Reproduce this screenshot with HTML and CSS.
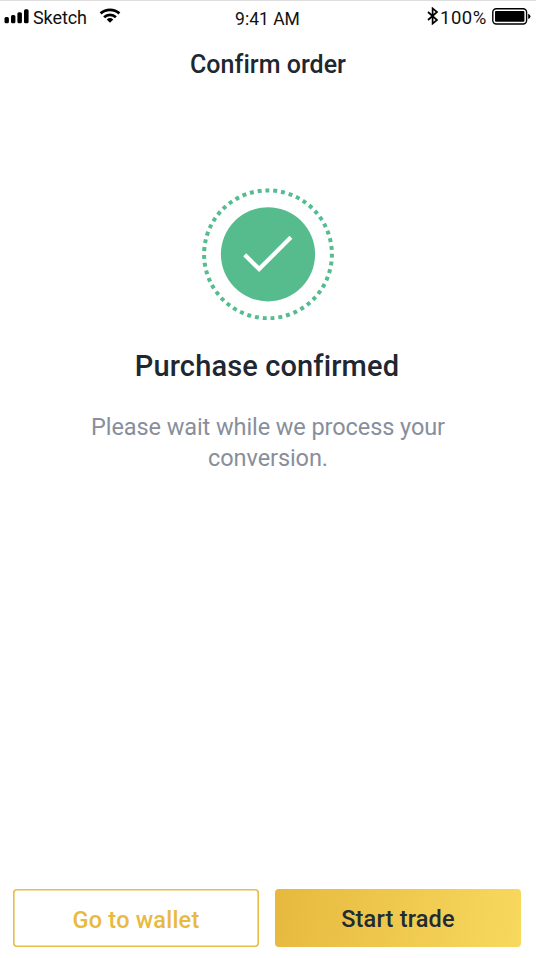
FILE: index.html
```html
<!DOCTYPE html>
<html lang="en">
<head>
<meta charset="utf-8">
<title>Confirm order</title>
<link rel="stylesheet" href="styles.css">
</head>
<body>
<div class="screen">
  <header class="status">
    <div class="status-left">
      <svg class="signal" width="25" height="15" viewBox="0 0 25 15"><rect x="0.5" y="8" width="4.4" height="6.3" rx="1.5"/><rect x="7" y="6" width="4.4" height="8.3" rx="1.5"/><rect x="13.4" y="3.2" width="4.5" height="11.1" rx="1.5"/><rect x="20" y="0.2" width="4.6" height="14.1" rx="1.5"/></svg>
      <span class="carrier">Sketch</span>
      <svg class="wifi" width="22" height="15" viewBox="0 0 22 15"><g fill="none" stroke="#000" stroke-width="2.8"><path d="M1.6 5.4C7 .6 15 .6 20.4 5.4"/><path d="M5.1 9.2C8.4 6.2 13.6 6.2 16.9 9.2"/></g><path d="M7.7 11.4Q11 8.8 14.3 11.4L11 14.7Z"/></svg>
    </div>
    <time class="clock">9:41 AM</time>
    <div class="status-right">
      <svg class="bluetooth" width="12" height="18" viewBox="0 0 12 18"><path d="M1 5L10 13L5.6 16.6V1.4L10 5L1 13" fill="none" stroke="#000" stroke-width="1.7"/></svg>
      <span class="percent">100%</span>
      <svg class="battery" width="39" height="17" viewBox="0 0 39 17"><rect x=".8" y=".8" width="33.8" height="15.2" rx="3.5" fill="none" stroke="#000" stroke-width="1.4"/><rect x="3" y="3" width="29.4" height="10.8" rx="1"/><path d="M36.2 5.8Q38.5 6.8 38.5 8.4T36.2 11Z"/></svg>
    </div>
  </header>
  <h1 class="title">Confirm order</h1>
  <main class="content">
    <svg class="badge" width="132" height="132" viewBox="0 0 132 132">
      <circle class="ring" cx="66" cy="66.3" r="63.9" pathLength="102" transform="rotate(-92.3 66 66.3)"/>
      <circle class="disc" cx="66" cy="66.3" r="47.1"/>
      <path class="check" d="M42.7 66.7L57.1 81.1L88.9 49.3"/>
    </svg>
    <h2 class="heading">Purchase confirmed</h2>
    <p class="message"><span class="line-one">Please wait while we process your</span><br><span class="line-two">conversion.</span></p>
  </main>
  <footer class="actions">
    <button class="button outline"><span>Go to wallet</span></button>
    <button class="button filled"><span>Start trade</span></button>
  </footer>
</div>
</body>
</html>
```
FILE: styles.css
```css
* { box-sizing: border-box; }
body { margin: 0; background: #fff; font-family: Roboto, "Noto Sans", sans-serif; color: #1f2731; }
.screen { height: 958px; display: flex; flex-direction: column; border-top: 1px solid #dedede; overflow: hidden; }
.status { height: 35px; flex: none; display: grid; grid-template-columns: 1fr auto 1fr; padding: 0 5px 0 4px; color: #111; font-size: 18px; line-height: 34px; }
.status-left, .status-right { display: flex; align-items: flex-start; white-space: nowrap; }
.status-right { justify-content: flex-end; }
.signal { margin-top: 8px; }
.carrier { margin-left: 4px; width: 54px; letter-spacing: -.1px; }
.wifi { margin: 7px 0 0 12px; }
.clock { font-size: 17.5px; line-height: 36px; }
.bluetooth { margin: 6px 1px 0 0; }
.percent { width: 52px; font-size: 18.5px; letter-spacing: .5px; }
.battery { margin-top: 7px; }
.title { margin: 10px 0 0; font-size: 25px; line-height: 38px; font-weight: 500; text-align: center; letter-spacing: .03px; }
.content { display: flex; flex-direction: column; align-items: center; padding-top: 104px; }
.ring { fill: none; stroke: #54bc90; stroke-width: 4; stroke-dasharray: 1 1; }
.disc { fill: #57bc8d; }
.check { fill: none; stroke: #fff; stroke-width: 4.2; }
.heading { margin: 25px 2px 0 0; font-size: 29px; line-height: 42px; font-weight: 500; letter-spacing: .13px; }
.message { margin: 25px 0 0; font-size: 23.5px; line-height: 30px; color: #888e9b; text-align: center; letter-spacing: -.08px; }
.line-two { position: relative; top: 1px; }
.actions { display: grid; grid-template-columns: 246px 246px; gap: 16px; margin: auto 0 11px; padding-left: 13px; }
.button { height: 58px; border: 0; border-radius: 4px; padding: 0; font: 500 23.5px/30px Roboto, "Noto Sans", sans-serif; color: #222b33; letter-spacing: .2px; }
.outline { box-shadow: inset 0 0 0 1.6px #e9bd45; background: #fff; color: #e8ba3f; padding-top: 3px; }
.filled { background: linear-gradient(100deg, #e6b93e, #f7d95e); padding-top: 1px; }
```
